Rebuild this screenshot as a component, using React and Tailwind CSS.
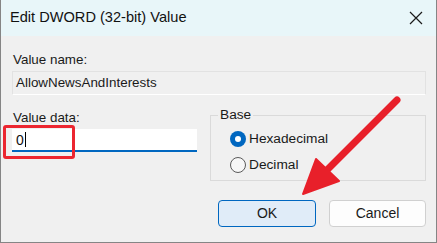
import React from 'react';

const font = { fontFamily: '"Liberation Sans", Arial, sans-serif' };

const Radio = ({ checked, label }) => (
  <label className="flex items-center h-[26px]">
    {checked ? (
      <span className="w-[16px] h-[16px] rounded-full bg-[#0067c0] flex items-center justify-center">
        <span className="w-[6px] h-[6px] rounded-full bg-white" />
      </span>
    ) : (
      <span className="w-[16px] h-[16px] rounded-full border border-[#5a5a5a] bg-[#f7f7f7]" />
    )}
    <span className="ml-[3px] text-[13.7px] text-[#1a1a1a]">{label}</span>
  </label>
);

const App = () => {
  return (
    <div className="w-[437px] h-[243px] bg-[#f0f0f0] relative overflow-hidden" style={font}>
      <div className="h-full border-x border-b border-[#858585] flex flex-col">
        {/* title bar */}
        <div className="h-[36px] bg-[#e8f6f9] flex items-center justify-between pl-[9px] pr-[12px] shrink-0">
          <span className="text-[14.6px] text-[#111]">Edit DWORD (32-bit) Value</span>
          <svg width="14" height="14" viewBox="0 0 14 14" className="mr-[1px]">
            <path d="M1 1 L13 13 M13 1 L1 13" stroke="#1a1a1a" strokeWidth="1.2" />
          </svg>
        </div>

        <div className="pl-[11px] pr-[10px] pt-[15px] flex flex-col">
          <div className="text-[13.4px] leading-[18px] text-[#1a1a1a] pl-[1px]">Value name:</div>
          <div className="mt-[2px] h-[24px] border border-[#e2e2e2] border-b-white bg-[#f0f0f0] flex items-center pl-[3px] text-[13.4px] text-[#1a1a1a]">
            AllowNewsAndInterests
          </div>

          <div className="flex mt-[14px]">
            <div className="w-[185px] flex flex-col">
              <div className="text-[13.4px] leading-[18px] text-[#1a1a1a] pl-[1px]">Value data:</div>
              <div className="mt-[2px] h-[23px] bg-white border-b-2 border-[#0067c0] flex items-center pl-[4px]">
                <span className="text-[14px] text-[#111] leading-none">0</span>
                <span className="w-px h-[15px] bg-black ml-[1px]" />
              </div>
            </div>

            <fieldset className="ml-[13px] flex-1 border border-[#dadada] h-[74px] -mt-[2px] px-[19px]">
              <legend className="px-[2px] ml-[-12px] text-[13.7px] leading-[16px] text-[#1a1a1a]">Base</legend>
              <div className="mt-[3px]">
                <Radio checked label="Hexadecimal" />
                <Radio label="Decimal" />
              </div>
            </fieldset>
          </div>

          <div className="flex justify-end gap-[13px] mt-[19px]">
            <button className="w-[98px] h-[27px] rounded-[4px] border border-[#0067c0] bg-[#e0ecf8] text-[14px] text-[#1a1a1a]">
              OK
            </button>
            <button className="w-[97px] h-[27px] rounded-[4px] border border-[#d0d0d0] bg-[#fdfdfd] text-[14px] text-[#1a1a1a]">
              Cancel
            </button>
          </div>
        </div>
      </div>

      {/* red highlight */}
      <div className="absolute left-[3px] top-[125px] w-[72px] h-[34px] border-[3px] border-[#ec2630] rounded-[3px]" />

      {/* red arrow */}
      <svg className="absolute left-0 top-0 pointer-events-none" width="437" height="243" viewBox="0 0 437 243">
        <line x1="397" y1="100" x2="326" y2="171" stroke="#e8202a" strokeWidth="7" strokeLinecap="round" />
        <path d="M303 194 L316 159 L339 181 Z" fill="#e8202a" stroke="#e8202a" strokeWidth="2" strokeLinejoin="round" />
      </svg>
    </div>
  );
};

export default App;
